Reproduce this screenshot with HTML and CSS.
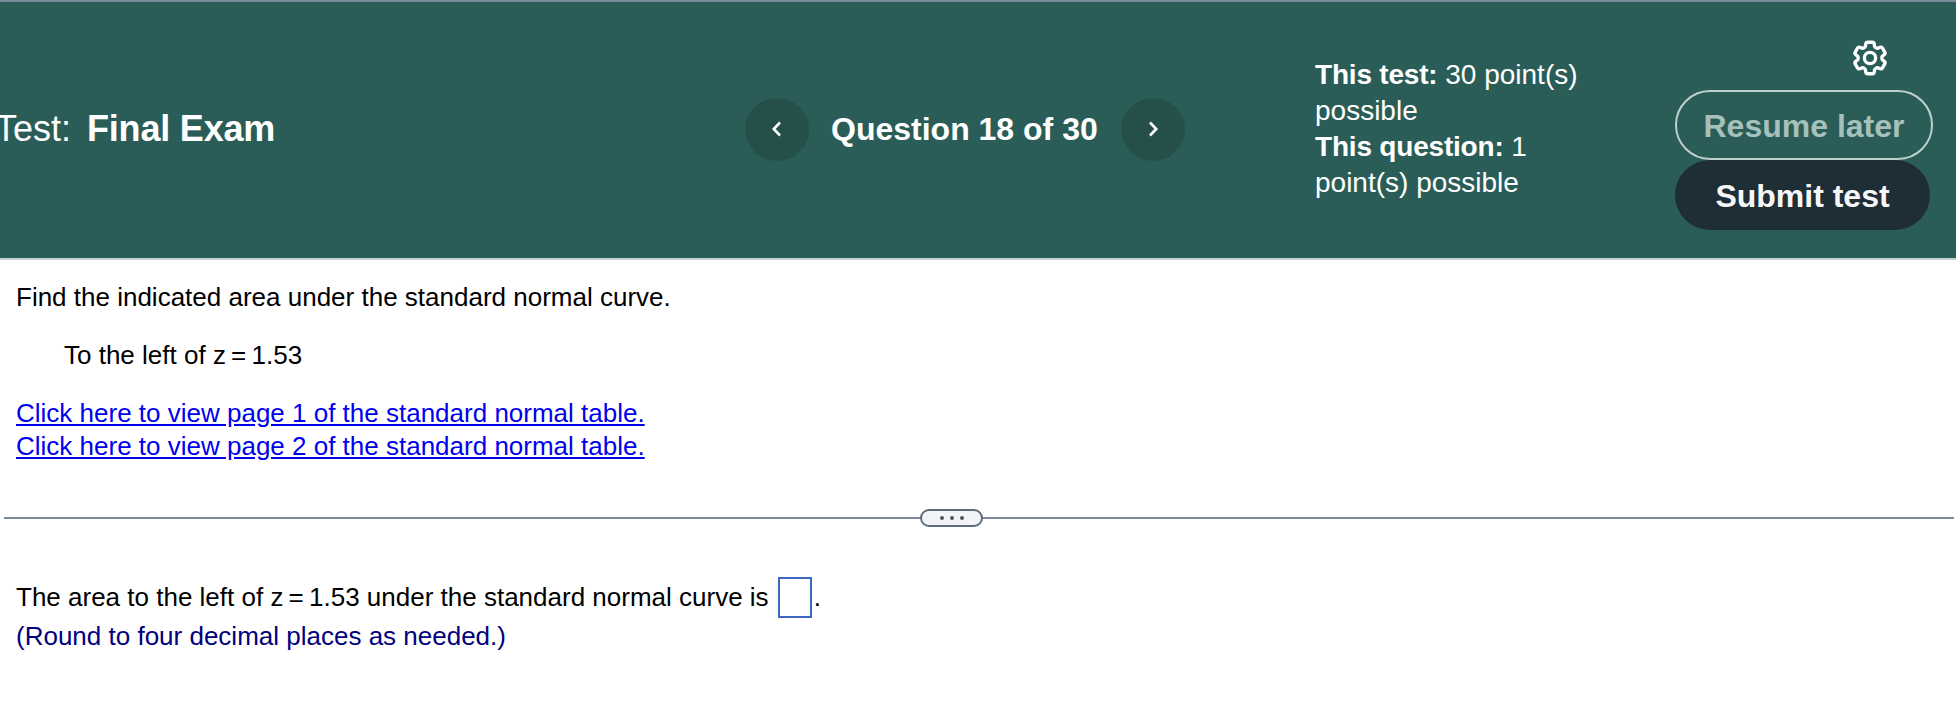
FILE: index.html
```html
<!DOCTYPE html>
<html lang="en">
<head>
<meta charset="utf-8">
<title>Final Exam</title>
<link rel="stylesheet" href="styles.css">
</head>
<body>
<header class="top">
  <div class="title"><span class="test-label">Test:</span><b>Final Exam</b></div>
  <nav class="nav">
    <button class="circle" aria-label="Previous"><svg width="14" height="18" viewBox="0 0 14 18"><path d="M10 2.500 3.800 9l6.200 6.500" fill="none" stroke="#fff" stroke-width="2.600"/></svg></button>
    <span class="qnum">Question 18 of 30</span>
    <button class="circle" aria-label="Next"><svg width="14" height="18" viewBox="0 0 14 18"><path d="M4 2.500 10.200 9 4 15.500" fill="none" stroke="#fff" stroke-width="2.600"/></svg></button>
  </nav>
  <div class="info">
    <div><b>This test:</b> 30 point(s) possible</div>
    <div><b>This question:</b> 1 point(s) possible</div>
  </div>
  <div class="actions">
    <svg class="gear" width="42" height="42" viewBox="0 0 24 24" fill="none" stroke="#fff" stroke-width="1.900" stroke-linejoin="round"><path d="M9.594 3.940c.09-.542.56-.94 1.110-.94h2.593c.55 0 1.020.398 1.110.94l.213 1.281c.063.374.313.686.645.870.074.040.147.083.220.127.325.196.72.257 1.075.124l1.217-.456a1.125 1.125 0 011.370.490l1.296 2.247a1.125 1.125 0 01-.26 1.431l-1.003.827c-.293.241-.438.613-.43.992a7.723 7.723 0 010 .255c-.008.378.137.75.43.991l1.004.827c.424.35.534.955.26 1.430l-1.298 2.247a1.125 1.125 0 01-1.369.491l-1.217-.456c-.355-.133-.75-.072-1.076.124a6.470 6.470 0 01-.22.128c-.331.183-.581.495-.644.869l-.213 1.281c-.09.543-.56.94-1.110.94h-2.594c-.55 0-1.019-.398-1.110-.94l-.213-1.281c-.062-.374-.312-.686-.644-.87a6.520 6.520 0 01-.22-.127c-.325-.196-.72-.257-1.076-.124l-1.217.456a1.125 1.125 0 01-1.369-.49l-1.297-2.247a1.125 1.125 0 01.26-1.431l1.004-.827c.292-.24.437-.613.43-.991a6.932 6.932 0 010-.255c.007-.38-.138-.751-.43-.992l-1.004-.827a1.125 1.125 0 01-.26-1.430l1.297-2.247a1.125 1.125 0 011.370-.491l1.216.456c.356.133.751.072 1.076-.124.072-.044.146-.086.22-.128.332-.183.582-.495.644-.869l.214-1.280z"/><circle cx="12" cy="12" r="3.200"/></svg>
    <button class="btn resume">Resume later</button>
    <button class="btn submit">Submit test</button>
  </div>
</header>
<main>
  <section class="question">
    <p class="line first">Find the indicated area under the standard normal curve.</p>
    <p class="line indent">To the left of <span class="math">z = 1.53</span></p>
    <p class="links">
      <a href="#">Click here to view page 1 of the standard normal table.</a><br>
      <a href="#">Click here to view page 2 of the standard normal table.</a>
    </p>
  </section>
  <div class="divider"><span class="grip"><i></i><i></i><i></i></span></div>
  <section class="answer">
    <p class="line">The area to the left of <span class="math">z = 1.53</span> under the standard normal curve is <span class="box"></span>.</p>
    <p class="hint">(Round to four decimal places as needed.)</p>
  </section>
</main>
</body>
</html>
```
FILE: styles.css
```css
* { box-sizing: border-box; }
html, body { margin: 0; height: 100%; }
body {
  font-family: "Liberation Sans", Arial, sans-serif;
  font-size: 26px;
  color: #000;
  background: #fff;
  overflow: hidden;
}
.top {
  height: 260px;
  background: #2a5d57;
  border-top: 2px solid #7b8a98;
  border-bottom: 2px solid #c6ced8;
  color: #fff;
  display: flex;
  align-items: center;
}
.title {
  width: 750px;
  margin-left: -5px;
  margin-top: -2px;
  font-size: 36px;
  flex: none;
}
.title b { letter-spacing: -0.2px; }
.test-label { margin-right: 16px; }
.nav {
  display: flex;
  align-items: center;
  width: 570px;
  margin-top: -2px;
  flex: none;
}
.circle {
  width: 64px;
  height: 63px;
  border: 0;
  padding: 0;
  border-radius: 50%;
  background: #245049;
  display: flex;
  align-items: center;
  justify-content: center;
  flex: none;
}
.qnum {
  font-size: 32px;
  font-weight: 700;
  margin: 0 23px 0 22px;
  white-space: nowrap;
}
.info {
  width: 280px;
  margin-top: -2px;
  font-size: 28px;
  line-height: 36px;
  flex: none;
}
.info b { letter-spacing: -0.2px; }
.actions {
  width: 258px;
  margin-left: 80px;
  flex: none;
  display: flex;
  flex-direction: column;
  align-items: flex-start;
  margin-top: 6px;
}
.gear { margin: 0 0 11px 174px; }
.btn {
  font-family: inherit;
  font-size: 32px;
  font-weight: 700;
  border-radius: 35px;
  padding: 4px 0 0;
}
.resume {
  width: 258px;
  height: 70px;
  background: transparent;
  color: #a6c0bb;
  border: 2px solid #bfd0cc;
}
.submit {
  width: 255px;
  height: 70px;
  background: #1f2e35;
  color: #f6f7fb;
  border: 0;
}
.question { padding: 22px 16px 0; }
.line { margin: 0; line-height: 30px; }
.question .line { margin-bottom: 27px; }
.question .first { margin-bottom: 28px; }
.indent { padding-left: 48px; }
.math { word-spacing: -2px; }
.links { margin: 0; line-height: 33px; }
.links a { color: #0000ee; }
.divider {
  margin: 54px 2px 0 4px;
  height: 2px;
  background: #7b8a98;
  position: relative;
}
.grip {
  position: absolute;
  top: -8px;
  left: 916px;
  width: 63px;
  height: 18px;
  background: #f2f4f7;
  border: 2px solid #5e6c7c;
  border-radius: 9px;
  display: flex;
  align-items: center;
  justify-content: center;
  gap: 6px;
}
.grip i {
  width: 4px;
  height: 4px;
  border-radius: 50%;
  background: #4a5560;
}
.answer { padding: 58px 16px 0; }
.box {
  display: inline-block;
  width: 34px;
  height: 41px;
  border: 2px solid #3c66c0;
  vertical-align: middle;
  margin: 0 2px 3px 2px;
}
.hint { margin: 0; color: #000080; line-height: 30px; }
```
